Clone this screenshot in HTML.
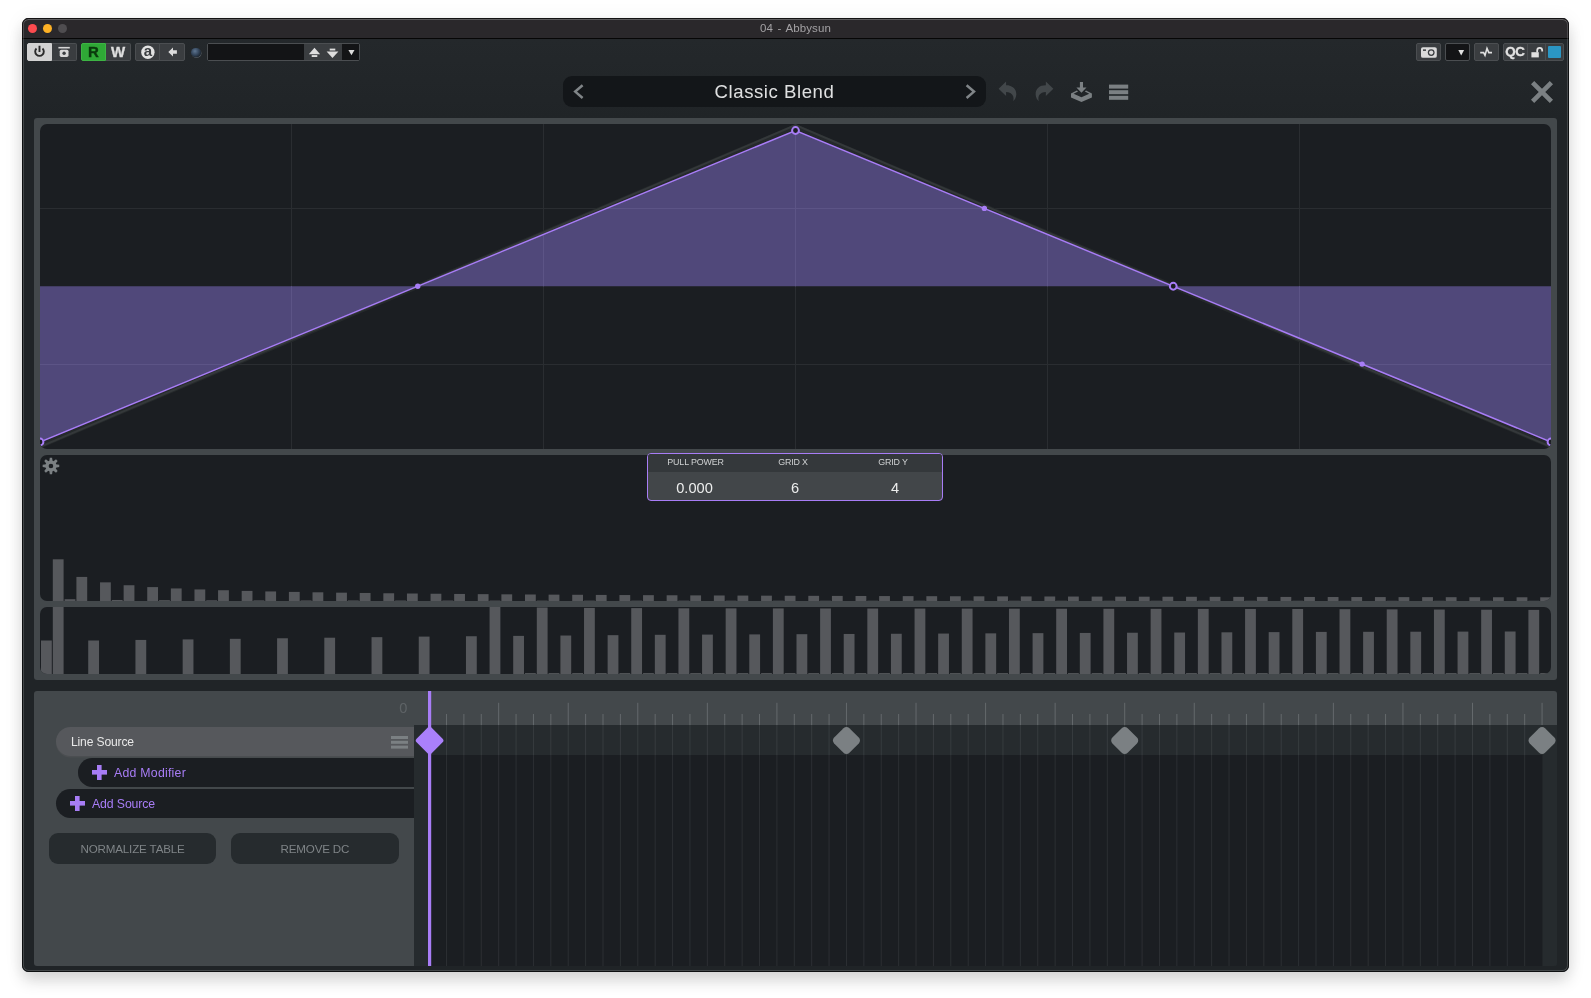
<!DOCTYPE html>
<html><head><meta charset="utf-8"><title>04 - Abbysun</title>
<style>
*{box-sizing:border-box;margin:0;padding:0}
html,body{width:1591px;height:998px;background:#fff;overflow:hidden}
body{position:relative;font-family:"Liberation Sans",sans-serif;}
.abs{position:absolute}
#win{position:absolute;left:22px;top:18px;width:1547px;height:954px;background:#23272a;border-radius:6.5px;overflow:hidden;will-change:transform;
 box-shadow:0 9px 16px rgba(0,0,0,.14),0 2px 20px rgba(0,0,0,.07);}
#rim{position:absolute;left:0;top:0;width:100%;height:100%;border-radius:6.5px;border:1px solid rgba(0,0,0,.55);box-shadow:inset 0 0 0 1px rgba(255,255,255,.16),inset 0 1px 0 0 rgba(255,255,255,.1);pointer-events:none}
#tbar{position:absolute;left:0;top:0;width:100%;height:21px;background:#2a282b;border-top:1px solid #2a282b;border-bottom:1px solid #060606;}
#ttl{position:absolute;left:0;width:100%;top:3px;text-align:center;font-size:11.5px;color:#a3a1a4;letter-spacing:0.1px;word-spacing:1.3px}
.tl{position:absolute;top:5px;width:9px;height:9px;border-radius:50%}
#gbody{position:absolute;left:0;top:21px;width:100%;height:933px;background:linear-gradient(#24282b,#202427 80px);}
.btn{position:absolute;top:25px;height:18px;background:#3a3d40;border:1px solid #4b4e51;}
.bl{position:absolute;left:0;top:0;width:100%;text-align:center;font-weight:bold;font-size:15px;line-height:16px;-webkit-text-stroke:0.35px currentColor}
.lb{position:absolute;top:2.1px;text-align:center;font-size:8.9px;line-height:13px;color:#d0d2d3;letter-spacing:-0.15px}
.vl{position:absolute;top:25.5px;text-align:center;font-size:14.6px;line-height:17px;color:#eceded}
.tx{font-size:12.3px;line-height:16px;white-space:nowrap}
.plus{width:15px;height:15px;background:linear-gradient(#a87df6,#a87df6) 50% 0/4.6px 100% no-repeat,linear-gradient(#a87df6,#a87df6) 0 50%/100% 4.6px no-repeat}
.bt{top:142px;height:31px;border-radius:9px;background:#262b2e;color:#7f8487;font-size:11.6px;letter-spacing:-0.15px;line-height:32.6px;text-align:center;white-space:nowrap}
</style></head><body>
<div id="win">
 <div id="gbody"></div>

 <!-- host toolbar -->
 <div id="hostbar">
  <div class="btn" style="left:5px;width:25px;background:#d2d2d2;border-color:#d2d2d2;border-radius:2px 0 0 2px">
   <svg class="abs" style="left:0;top:0" width="23" height="16" viewBox="0 0 23 16"><path d="M8.5 4.5A4.3 4.3 0 1 0 14.5 4.5" fill="none" stroke="#2a2a2a" stroke-width="1.9"/><path d="M11.5 1.8V8" stroke="#2a2a2a" stroke-width="1.9"/></svg>
  </div>
  <div class="btn" style="left:30px;width:25px;border-left:none;border-radius:0 2px 2px 0">
   <svg class="abs" style="left:0;top:0" width="24" height="16" viewBox="0 0 24 16"><rect x="6.4" y="2.9" width="11.4" height="1.6" fill="#d6d6d6"/><rect x="7.7" y="5.7" width="8.8" height="7.2" rx="1.6" fill="#d6d6d6"/><circle cx="12.1" cy="9.2" r="1.7" fill="#3a3d40"/></svg>
  </div>
  <div class="btn" style="left:59px;width:25px;background:#2fa836;border-color:#3db444;border-radius:2px 0 0 2px"><span class="bl" style="color:#0a3a0c">R</span></div>
  <div class="btn" style="left:84px;width:25px;border-left:none;border-radius:0 2px 2px 0"><span class="bl" style="color:#dedede">W</span></div>
  <div class="btn" style="left:113px;width:25px;border-radius:2px 0 0 2px">
   <svg class="abs" style="left:0;top:0" width="23" height="16" viewBox="0 0 23 16"><circle cx="11.9" cy="8.2" r="6.7" fill="#e2e2e2"/><text x="11.9" y="12.3" text-anchor="middle" style="font-family:'Liberation Sans',sans-serif;font-weight:bold;font-size:15px" fill="#3a3d40">a</text></svg>
  </div>
  <div class="btn" style="left:138px;width:25px;border-left:1px solid #4b4e51;border-radius:0 2px 2px 0;margin-left:-1px;width:26px">
   <svg class="abs" style="left:0;top:0" width="24" height="16" viewBox="0 0 24 16"><path d="M8.3 8L13 3.6V6.2H16.9V9.8H13V12.4Z" fill="#dcdcdc"/></svg>
  </div>
  <div class="abs" style="left:169px;top:29.5px;width:9.5px;height:9.5px;border-radius:50%;background:radial-gradient(circle at 40% 35%,#5e7590 0,#34465c 45%,#1a222c 80%);box-shadow:0.5px 0.8px 0 rgba(120,130,140,.55)"></div>
  <div class="btn" style="left:185px;width:153px;border-radius:2px"></div>
  <div class="abs" style="left:186px;top:26px;width:96px;height:16px;background:#131416"></div>
  <svg class="abs" style="left:282px;top:26px" width="38" height="16" viewBox="0 0 38 16"><path d="M4.8 10.2L10.5 3.8L16.2 10.2Z" fill="#dedede"/><rect x="7.7" y="11.1" width="5.6" height="1.9" fill="#dedede"/><path d="M22.6 7.4H34.4L28.5 14Z" fill="#dedede"/><rect x="25.7" y="4.6" width="5.6" height="1.9" fill="#dedede"/></svg>
  <div class="abs" style="left:320px;top:26px;width:17px;height:16px;background:#131416"></div>
  <svg class="abs" style="left:320px;top:26px" width="17" height="16" viewBox="0 0 17 16"><path d="M6.4 5.9H12.5L9.45 11.2Z" fill="#dcdcdc"/></svg>

  <div class="btn" style="left:1394px;width:25px;border-radius:2px">
   <svg class="abs" style="left:0;top:0" width="23" height="16" viewBox="0 0 23 16"><rect x="4" y="3.2" width="15.8" height="10.6" rx="1.9" fill="#dadada"/><circle cx="14.2" cy="8.6" r="3.4" fill="#3a3d40"/><circle cx="14.2" cy="8.6" r="2.1" fill="#dadada"/><rect x="6" y="5.4" width="3" height="1.5" fill="#3a3d40"/></svg>
  </div>
  <div class="btn" style="left:1423px;width:25px;border-radius:2px;background:#131416">
   <svg class="abs" style="left:0;top:0" width="23" height="16" viewBox="0 0 23 16"><path d="M12.3 6h5.8L15.2 11.4Z" fill="#e0e0e0"/></svg>
  </div>
  <div class="btn" style="left:1452px;width:25px;border-radius:2px">
   <svg class="abs" style="left:0;top:0" width="23" height="16" viewBox="0 0 23 16"><path d="M5.2 8.6H8.6L10 11.4L12 4.4L13.8 8.6H17" fill="none" stroke="#e0e0e0" stroke-width="1.6" stroke-linejoin="miter"/></svg>
  </div>
  <div class="btn" style="left:1481px;width:61px;border-radius:2px"></div>
  <div class="abs" style="left:1505px;top:26px;width:1px;height:16px;background:#4b4e51"></div>
  <div class="abs" style="left:1523px;top:26px;width:1px;height:16px;background:#4b4e51"></div>
  <span class="bl" style="left:1480.8px;top:25px;width:24px;font-size:13.4px;line-height:18px;color:#e2e2e2;letter-spacing:-0.5px">QC</span>
  <svg class="abs" style="left:1506px;top:26px" width="18" height="16" viewBox="0 0 18 16"><rect x="3.4" y="8.2" width="7.4" height="5.2" fill="#e0e0e0"/><path d="M9.2 8.4V6.4A2.5 2.5 0 0 1 14.2 6.4V7.6" fill="none" stroke="#e0e0e0" stroke-width="1.8"/></svg>
  <div class="abs" style="left:1526.4px;top:28px;width:12.6px;height:12px;background:#2b96c4;border-radius:1px"></div>
 </div>

 <!-- preset bar -->
 <div class="abs" style="left:541px;top:58px;width:423px;height:31px;border-radius:9px;background:#131619"></div>
 <div id="pname" class="abs" style="left:541px;top:58px;width:423px;height:31px;line-height:31px;text-align:center;font-size:18.6px;color:#dfe0e1;letter-spacing:0.55px">Classic Blend</div>
 <svg class="abs" style="left:541px;top:58px" width="600" height="31" viewBox="0 0 600 31">
  <path d="M19.6 9.2L12.2 15.6L19.6 22" fill="none" stroke="#808588" stroke-width="2.5"/>
  <path d="M403.6 9.2L411 15.6L403.6 22" fill="none" stroke="#808588" stroke-width="2.5"/>
  <g fill="#42474a"><path d="M435.6 12.7L443.1 5.4V9.3C449.5 9.3 453.4 12.6 453.3 18.4C453.2 21.3 451.8 23.7 450.1 25.1C451.6 20.4 449.2 16.2 443.1 16.1V19.9Z"/><path d="M490.35 12.7L482.85 5.4V9.3C476.45 9.3 472.55 12.6 472.65 18.4C472.75 21.3 474.15 23.7 475.85 25.1C474.35 20.4 476.75 16.2 482.85 16.1V19.9Z"/></g>
  <g fill="#7b8083">
   <path d="M516.9 6H520V11.6H523.5L518.45 16.8L513.4 11.6H516.9Z"/>
   <path d="M508 17.4L513.9 14.6L515 15.6L510.6 17.8L518.45 21.2L526.3 17.8L521.9 15.6L523 14.6L528.9 17.4V21.5L518.45 26.1L508 21.5Z"/>
   <rect x="546" y="8.6" width="19.2" height="4"/><rect x="546" y="14.2" width="19.2" height="4"/><rect x="546" y="19.8" width="19.2" height="4"/>
  </g>
 </svg>
 <svg class="abs" style="left:1508px;top:62px" width="24" height="24" viewBox="0 0 24 24"><path d="M2.6 2.6L21.4 21.4M21.4 2.6L2.6 21.4" stroke="#7b8083" stroke-width="4.6"/></svg>

 <!-- wave panel -->
 <div class="abs" style="left:12px;top:100px;width:1523px;height:562px;border-radius:3px;background:#43484b"></div>
 <div class="abs" id="wave" style="left:18px;top:106px;width:1511px;height:325px;border-radius:7px;background:#1b1e22;overflow:hidden"><svg class="abs" style="left:0;top:0" width="1511" height="325" viewBox="0 0 1511 325"><rect x="251" y="0" width="1" height="325" fill="#2a2d31"/><rect x="503" y="0" width="1" height="325" fill="#2a2d31"/><rect x="755" y="0" width="1" height="325" fill="#2a2d31"/><rect x="1007" y="0" width="1" height="325" fill="#2a2d31"/><rect x="1259" y="0" width="1" height="325" fill="#2a2d31"/><rect x="0" y="84" width="1511" height="1" fill="#2a2d31"/><rect x="0" y="240" width="1511" height="1" fill="#2a2d31"/><path d="M0 322L755.5 2.6L1511 322" fill="none" stroke="#25292b" stroke-width="5"/><path d="M0 322.9L755.5 1.2L1511 322.9" fill="none" stroke="#34383a" stroke-width="2"/><path d="M0 162.25L0 318.00L755.5 6.50L1511 318.00L1511 162.25Z" fill="#50487a"/><clipPath id="cf"><path d="M0 162.25L0 318.00L755.5 6.50L1511 318.00L1511 162.25Z"/></clipPath><g clip-path="url(#cf)" fill="#5c5486"><rect x="251" y="0" width="1" height="325"/><rect x="503" y="0" width="1" height="325"/><rect x="755" y="0" width="1" height="325"/><rect x="1007" y="0" width="1" height="325"/><rect x="1259" y="0" width="1" height="325"/><rect x="0" y="84" width="1511" height="1"/><rect x="0" y="240" width="1511" height="1"/></g><path d="M0 318.00L755.5 6.50L1511 318.00" fill="none" stroke="#a87df6" stroke-width="1.45"/><circle cx="377.75" cy="162.25" r="2.7" fill="#a87df6"/><circle cx="944.38" cy="84.38" r="2.7" fill="#a87df6"/><circle cx="1322.12" cy="240.12" r="2.7" fill="#a87df6"/><circle cx="0.00" cy="318.00" r="3.4" fill="#1b1e22" stroke="#a87df6" stroke-width="2"/><circle cx="755.50" cy="6.50" r="3.4" fill="#1b1e22" stroke="#a87df6" stroke-width="2"/><circle cx="1133.25" cy="162.25" r="3.4" fill="#1b1e22" stroke="#a87df6" stroke-width="2"/><circle cx="1511.00" cy="318.00" r="3.4" fill="#1b1e22" stroke="#a87df6" stroke-width="2"/></svg></div>
 <div class="abs" id="amp" style="left:18px;top:437px;width:1511px;height:146px;border-radius:7px;background:#1b1e22;overflow:hidden"><svg class="abs" style="left:0;top:0" width="1511" height="146" viewBox="0 0 1511 146"><g fill="#56585c"><rect x="12.80" y="104.30" width="10.8" height="41.70"/><rect x="24.61" y="144.20" width="10.8" height="1.80"/><rect x="36.41" y="121.92" width="10.8" height="24.08"/><rect x="60.02" y="127.35" width="10.8" height="18.65"/><rect x="71.83" y="144.96" width="10.8" height="1.04"/><rect x="83.63" y="130.24" width="10.8" height="15.76"/><rect x="107.24" y="132.10" width="10.8" height="13.90"/><rect x="119.05" y="145.20" width="10.8" height="0.80"/><rect x="130.85" y="133.43" width="10.8" height="12.57"/><rect x="154.46" y="134.43" width="10.8" height="11.57"/><rect x="166.27" y="145.32" width="10.8" height="0.68"/><rect x="178.07" y="135.23" width="10.8" height="10.77"/><rect x="201.68" y="135.89" width="10.8" height="10.11"/><rect x="213.48" y="145.40" width="10.8" height="0.60"/><rect x="225.29" y="136.43" width="10.8" height="9.57"/><rect x="248.90" y="136.90" width="10.8" height="9.10"/><rect x="260.70" y="145.46" width="10.8" height="0.54"/><rect x="272.51" y="137.30" width="10.8" height="8.70"/><rect x="296.12" y="137.66" width="10.8" height="8.34"/><rect x="307.92" y="145.50" width="10.8" height="0.50"/><rect x="319.73" y="137.97" width="10.8" height="8.03"/><rect x="343.34" y="138.26" width="10.8" height="7.74"/><rect x="355.14" y="145.54" width="10.8" height="0.46"/><rect x="366.95" y="138.51" width="10.8" height="7.49"/><rect x="390.55" y="138.74" width="10.8" height="7.26"/><rect x="402.36" y="145.56" width="10.8" height="0.44"/><rect x="414.16" y="138.95" width="10.8" height="7.05"/><rect x="437.77" y="139.14" width="10.8" height="6.86"/><rect x="449.58" y="145.59" width="10.8" height="0.41"/><rect x="461.38" y="139.32" width="10.8" height="6.68"/><rect x="484.99" y="139.49" width="10.8" height="6.51"/><rect x="496.80" y="145.61" width="10.8" height="0.39"/><rect x="508.60" y="139.64" width="10.8" height="6.36"/><rect x="532.21" y="139.78" width="10.8" height="6.22"/><rect x="544.02" y="145.62" width="10.8" height="0.38"/><rect x="555.82" y="139.92" width="10.8" height="6.08"/><rect x="579.43" y="140.04" width="10.8" height="5.96"/><rect x="591.23" y="145.64" width="10.8" height="0.36"/><rect x="603.04" y="140.16" width="10.8" height="5.84"/><rect x="626.65" y="140.27" width="10.8" height="5.73"/><rect x="638.45" y="145.65" width="10.8" height="0.35"/><rect x="650.26" y="140.38" width="10.8" height="5.62"/><rect x="673.87" y="140.48" width="10.8" height="5.52"/><rect x="685.67" y="145.67" width="10.8" height="0.33"/><rect x="697.48" y="140.57" width="10.8" height="5.43"/><rect x="721.09" y="140.66" width="10.8" height="5.34"/><rect x="732.89" y="145.68" width="10.8" height="0.32"/><rect x="744.70" y="140.75" width="10.8" height="5.25"/><rect x="768.30" y="140.83" width="10.8" height="5.17"/><rect x="780.11" y="145.69" width="10.8" height="0.31"/><rect x="791.91" y="140.91" width="10.8" height="5.09"/><rect x="815.52" y="140.98" width="10.8" height="5.02"/><rect x="827.33" y="145.70" width="10.8" height="0.30"/><rect x="839.13" y="141.05" width="10.8" height="4.95"/><rect x="862.74" y="141.12" width="10.8" height="4.88"/><rect x="874.55" y="145.70" width="10.8" height="0.30"/><rect x="886.35" y="141.18" width="10.8" height="4.82"/><rect x="909.96" y="141.25" width="10.8" height="4.75"/><rect x="921.77" y="145.71" width="10.8" height="0.29"/><rect x="933.57" y="141.31" width="10.8" height="4.69"/><rect x="957.18" y="141.37" width="10.8" height="4.63"/><rect x="968.98" y="145.72" width="10.8" height="0.28"/><rect x="980.79" y="141.42" width="10.8" height="4.58"/><rect x="1004.40" y="141.48" width="10.8" height="4.52"/><rect x="1016.20" y="145.73" width="10.8" height="0.27"/><rect x="1028.01" y="141.53" width="10.8" height="4.47"/><rect x="1051.62" y="141.58" width="10.8" height="4.42"/><rect x="1063.42" y="145.73" width="10.8" height="0.27"/><rect x="1075.23" y="141.63" width="10.8" height="4.37"/><rect x="1098.84" y="141.68" width="10.8" height="4.32"/><rect x="1110.64" y="145.74" width="10.8" height="0.26"/><rect x="1122.45" y="141.72" width="10.8" height="4.28"/><rect x="1146.05" y="141.77" width="10.8" height="4.23"/><rect x="1157.86" y="145.74" width="10.8" height="0.26"/><rect x="1169.66" y="141.81" width="10.8" height="4.19"/><rect x="1193.27" y="141.85" width="10.8" height="4.15"/><rect x="1205.08" y="145.75" width="10.8" height="0.25"/><rect x="1216.88" y="141.89" width="10.8" height="4.11"/><rect x="1240.49" y="141.93" width="10.8" height="4.07"/><rect x="1252.30" y="145.75" width="10.8" height="0.25"/><rect x="1264.10" y="141.97" width="10.8" height="4.03"/><rect x="1287.71" y="142.01" width="10.8" height="3.99"/><rect x="1299.52" y="145.76" width="10.8" height="0.24"/><rect x="1311.32" y="142.04" width="10.8" height="3.96"/><rect x="1334.93" y="142.08" width="10.8" height="3.92"/><rect x="1346.73" y="145.76" width="10.8" height="0.24"/><rect x="1358.54" y="142.11" width="10.8" height="3.89"/><rect x="1382.15" y="142.14" width="10.8" height="3.86"/><rect x="1393.95" y="145.77" width="10.8" height="0.23"/><rect x="1405.76" y="142.18" width="10.8" height="3.82"/><rect x="1429.37" y="142.21" width="10.8" height="3.79"/><rect x="1441.17" y="145.77" width="10.8" height="0.23"/><rect x="1452.98" y="142.24" width="10.8" height="3.76"/><rect x="1476.59" y="142.27" width="10.8" height="3.73"/><rect x="1488.39" y="145.77" width="10.8" height="0.23"/><rect x="1500.20" y="142.30" width="10.8" height="3.70"/></g><g transform="translate(10.95 10.95)" fill="#7b8083"><path transform="rotate(0)" d="M-1.7 -4.4L-1.15 -8.3H1.15L1.7 -4.4Z"/><path transform="rotate(45)" d="M-1.7 -4.4L-1.15 -8.3H1.15L1.7 -4.4Z"/><path transform="rotate(90)" d="M-1.7 -4.4L-1.15 -8.3H1.15L1.7 -4.4Z"/><path transform="rotate(135)" d="M-1.7 -4.4L-1.15 -8.3H1.15L1.7 -4.4Z"/><path transform="rotate(180)" d="M-1.7 -4.4L-1.15 -8.3H1.15L1.7 -4.4Z"/><path transform="rotate(225)" d="M-1.7 -4.4L-1.15 -8.3H1.15L1.7 -4.4Z"/><path transform="rotate(270)" d="M-1.7 -4.4L-1.15 -8.3H1.15L1.7 -4.4Z"/><path transform="rotate(315)" d="M-1.7 -4.4L-1.15 -8.3H1.15L1.7 -4.4Z"/><path fill-rule="evenodd" d="M0 -5.5A5.5 5.5 0 1 0 0 5.5A5.5 5.5 0 1 0 0 -5.5ZM0 -2.3A2.3 2.3 0 1 1 0 2.3A2.3 2.3 0 1 1 0 -2.3Z"/></g></svg></div>
 <div class="abs" id="phase" style="left:18px;top:589px;width:1511px;height:67px;border-radius:7px;background:#1b1e22;overflow:hidden"><svg class="abs" style="left:0;top:0" width="1511" height="67" viewBox="0 0 1511 67"><g fill="#56585c"><rect x="1.00" y="33.50" width="10.8" height="33.50"/><rect x="12.80" y="0.00" width="10.8" height="67.00"/><rect x="48.22" y="33.50" width="10.8" height="33.50"/><rect x="95.44" y="32.94" width="10.8" height="34.06"/><rect x="142.66" y="32.39" width="10.8" height="34.61"/><rect x="189.88" y="31.83" width="10.8" height="35.17"/><rect x="237.09" y="31.27" width="10.8" height="35.73"/><rect x="284.31" y="30.71" width="10.8" height="36.29"/><rect x="331.53" y="30.16" width="10.8" height="36.84"/><rect x="378.75" y="29.60" width="10.8" height="37.40"/><rect x="425.97" y="29.24" width="10.8" height="37.76"/><rect x="449.58" y="0.00" width="10.8" height="67.00"/><rect x="473.19" y="28.88" width="10.8" height="38.12"/><rect x="484.99" y="66.10" width="10.8" height="0.90"/><rect x="496.80" y="0.50" width="10.8" height="66.50"/><rect x="508.60" y="66.10" width="10.8" height="0.90"/><rect x="520.41" y="28.52" width="10.8" height="38.48"/><rect x="532.21" y="66.10" width="10.8" height="0.90"/><rect x="544.02" y="0.90" width="10.8" height="66.10"/><rect x="555.82" y="66.10" width="10.8" height="0.90"/><rect x="567.62" y="28.16" width="10.8" height="38.84"/><rect x="579.43" y="66.10" width="10.8" height="0.90"/><rect x="591.23" y="1.10" width="10.8" height="65.90"/><rect x="603.04" y="66.10" width="10.8" height="0.90"/><rect x="614.84" y="27.80" width="10.8" height="39.20"/><rect x="626.65" y="66.10" width="10.8" height="0.90"/><rect x="638.45" y="1.30" width="10.8" height="65.70"/><rect x="650.26" y="66.10" width="10.8" height="0.90"/><rect x="662.06" y="27.59" width="10.8" height="39.41"/><rect x="673.87" y="66.10" width="10.8" height="0.90"/><rect x="685.67" y="1.35" width="10.8" height="65.65"/><rect x="697.48" y="66.10" width="10.8" height="0.90"/><rect x="709.28" y="27.39" width="10.8" height="39.61"/><rect x="721.09" y="66.10" width="10.8" height="0.90"/><rect x="732.89" y="1.41" width="10.8" height="65.59"/><rect x="744.70" y="66.10" width="10.8" height="0.90"/><rect x="756.50" y="27.18" width="10.8" height="39.82"/><rect x="768.30" y="66.10" width="10.8" height="0.90"/><rect x="780.11" y="1.46" width="10.8" height="65.54"/><rect x="791.91" y="66.10" width="10.8" height="0.90"/><rect x="803.72" y="26.97" width="10.8" height="40.03"/><rect x="815.52" y="66.10" width="10.8" height="0.90"/><rect x="827.33" y="1.52" width="10.8" height="65.48"/><rect x="839.13" y="66.10" width="10.8" height="0.90"/><rect x="850.94" y="26.76" width="10.8" height="40.24"/><rect x="862.74" y="66.10" width="10.8" height="0.90"/><rect x="874.55" y="1.57" width="10.8" height="65.43"/><rect x="886.35" y="66.10" width="10.8" height="0.90"/><rect x="898.16" y="26.56" width="10.8" height="40.44"/><rect x="909.96" y="66.10" width="10.8" height="0.90"/><rect x="921.77" y="1.62" width="10.8" height="65.38"/><rect x="933.57" y="66.10" width="10.8" height="0.90"/><rect x="945.38" y="26.35" width="10.8" height="40.65"/><rect x="957.18" y="66.10" width="10.8" height="0.90"/><rect x="968.98" y="1.68" width="10.8" height="65.32"/><rect x="980.79" y="66.10" width="10.8" height="0.90"/><rect x="992.59" y="26.14" width="10.8" height="40.86"/><rect x="1004.40" y="66.10" width="10.8" height="0.90"/><rect x="1016.20" y="1.73" width="10.8" height="65.27"/><rect x="1028.01" y="66.10" width="10.8" height="0.90"/><rect x="1039.81" y="25.94" width="10.8" height="41.06"/><rect x="1051.62" y="66.10" width="10.8" height="0.90"/><rect x="1063.42" y="1.78" width="10.8" height="65.22"/><rect x="1075.23" y="66.10" width="10.8" height="0.90"/><rect x="1087.03" y="25.73" width="10.8" height="41.27"/><rect x="1098.84" y="66.10" width="10.8" height="0.90"/><rect x="1110.64" y="1.84" width="10.8" height="65.16"/><rect x="1122.45" y="66.10" width="10.8" height="0.90"/><rect x="1134.25" y="25.52" width="10.8" height="41.48"/><rect x="1146.05" y="66.10" width="10.8" height="0.90"/><rect x="1157.86" y="1.89" width="10.8" height="65.11"/><rect x="1169.66" y="66.10" width="10.8" height="0.90"/><rect x="1181.47" y="25.31" width="10.8" height="41.69"/><rect x="1193.27" y="66.10" width="10.8" height="0.90"/><rect x="1205.08" y="1.95" width="10.8" height="65.05"/><rect x="1216.88" y="66.10" width="10.8" height="0.90"/><rect x="1228.69" y="25.11" width="10.8" height="41.89"/><rect x="1240.49" y="66.10" width="10.8" height="0.90"/><rect x="1252.30" y="2.00" width="10.8" height="65.00"/><rect x="1264.10" y="66.10" width="10.8" height="0.90"/><rect x="1275.91" y="24.90" width="10.8" height="42.10"/><rect x="1287.71" y="66.10" width="10.8" height="0.90"/><rect x="1299.52" y="2.18" width="10.8" height="64.82"/><rect x="1311.32" y="66.10" width="10.8" height="0.90"/><rect x="1323.12" y="24.80" width="10.8" height="42.20"/><rect x="1334.93" y="66.10" width="10.8" height="0.90"/><rect x="1346.73" y="2.36" width="10.8" height="64.64"/><rect x="1358.54" y="66.10" width="10.8" height="0.90"/><rect x="1370.34" y="24.70" width="10.8" height="42.30"/><rect x="1382.15" y="66.10" width="10.8" height="0.90"/><rect x="1393.95" y="2.54" width="10.8" height="64.46"/><rect x="1405.76" y="66.10" width="10.8" height="0.90"/><rect x="1417.56" y="24.60" width="10.8" height="42.40"/><rect x="1429.37" y="66.10" width="10.8" height="0.90"/><rect x="1441.17" y="2.72" width="10.8" height="64.28"/><rect x="1452.98" y="66.10" width="10.8" height="0.90"/><rect x="1464.78" y="24.50" width="10.8" height="42.50"/><rect x="1476.59" y="66.10" width="10.8" height="0.90"/><rect x="1488.39" y="2.90" width="10.8" height="64.10"/><rect x="1500.20" y="66.10" width="10.8" height="0.90"/></g></svg></div>


 <div class="abs" id="ibox" style="left:625px;top:435px;width:296px;height:48px;border-radius:4px;background:#424649;border:1.4px solid #a87df6;overflow:hidden">
  <div class="abs" style="left:0;top:0;width:100%;height:17.6px;background:#34383b"></div>
  <div class="lb" style="left:1px;width:93px">PULL POWER</div><div class="lb" style="left:95px;width:100px">GRID X</div><div class="lb" style="left:195px;width:100px">GRID Y</div>
  <div class="vl" style="left:0px;width:93px">0.000</div><div class="vl" style="left:97px;width:100px">6</div><div class="vl" style="left:197px;width:100px">4</div>
 </div>
 <!-- bottom panel -->
 <div class="abs" id="bottom" style="left:12px;top:673px;width:1523px;height:275px;border-radius:3px;background:#43484b;overflow:hidden">
  <div class="abs" style="left:362.3px;top:9px;width:14px;font-size:14.6px;line-height:16px;color:#5e6366;text-align:center">0</div>
  <div class="abs" style="left:22px;top:36px;width:358px;height:29.2px;border-radius:14.6px 0 0 14.6px;background:#56585c;box-shadow:0 1.6px 0 #4b4e51"></div>
  <div class="abs tx" style="left:37px;top:43px;color:#e8e8e8;font-size:12.1px;letter-spacing:-0.15px">Line Source</div>
  <div class="abs" style="left:357px;top:44.6px;width:17px;height:3.3px;background:#7b8083;box-shadow:0 4.8px 0 #7b8083,0 9.6px 0 #7b8083"></div>
  <div class="abs" style="left:44px;top:67.2px;width:336px;height:28.6px;border-radius:14.3px 0 0 14.3px;background:#1b1e22"></div>
  <div class="abs plus" style="left:58px;top:74px"></div>
  <div class="abs tx" style="left:80px;top:74px;color:#a87df6;letter-spacing:0.25px">Add Modifier</div>
  <div class="abs" style="left:22px;top:98px;width:358px;height:28.8px;border-radius:14.4px 0 0 14.4px;background:#1b1e22"></div>
  <div class="abs plus" style="left:36px;top:105px"></div>
  <div class="abs tx" style="left:58px;top:105px;color:#a87df6;letter-spacing:-0.12px">Add Source</div>
  <div class="abs bt" style="left:14.8px;width:167.5px">NORMALIZE TABLE</div>
  <div class="abs bt" style="left:196.8px;width:168.2px">REMOVE DC</div>
<svg class="abs" style="left:380px;top:0" width="1143" height="275" viewBox="0 0 1143 275"><rect x="0" y="34" width="1143" height="241" fill="#1b1e22"/><rect x="0" y="34" width="1143" height="30" fill="#262b2e"/><rect x="0" y="34" width="15.6" height="241" fill="#262b2e"/><rect x="1128.4" y="34" width="14.6" height="241" fill="#262b2e"/><rect x="31.99" y="23.0" width="1" height="11.0" fill="#64696c"/><rect x="31.99" y="34" width="1" height="30" fill="#373c3f"/><rect x="31.99" y="64" width="1" height="211" fill="#2c2f33"/><rect x="49.38" y="23.0" width="1" height="11.0" fill="#64696c"/><rect x="49.38" y="34" width="1" height="30" fill="#373c3f"/><rect x="49.38" y="64" width="1" height="211" fill="#2c2f33"/><rect x="66.77" y="23.0" width="1" height="11.0" fill="#64696c"/><rect x="66.77" y="34" width="1" height="30" fill="#373c3f"/><rect x="66.77" y="64" width="1" height="211" fill="#2c2f33"/><rect x="84.16" y="11.8" width="1" height="22.2" fill="#64696c"/><rect x="84.16" y="34" width="1" height="30" fill="#373c3f"/><rect x="84.16" y="64" width="1" height="211" fill="#2c2f33"/><rect x="101.55" y="23.0" width="1" height="11.0" fill="#64696c"/><rect x="101.55" y="34" width="1" height="30" fill="#373c3f"/><rect x="101.55" y="64" width="1" height="211" fill="#2c2f33"/><rect x="118.94" y="23.0" width="1" height="11.0" fill="#64696c"/><rect x="118.94" y="34" width="1" height="30" fill="#373c3f"/><rect x="118.94" y="64" width="1" height="211" fill="#2c2f33"/><rect x="136.33" y="23.0" width="1" height="11.0" fill="#64696c"/><rect x="136.33" y="34" width="1" height="30" fill="#373c3f"/><rect x="136.33" y="64" width="1" height="211" fill="#2c2f33"/><rect x="153.72" y="11.8" width="1" height="22.2" fill="#64696c"/><rect x="153.72" y="34" width="1" height="30" fill="#373c3f"/><rect x="153.72" y="64" width="1" height="211" fill="#2c2f33"/><rect x="171.11" y="23.0" width="1" height="11.0" fill="#64696c"/><rect x="171.11" y="34" width="1" height="30" fill="#373c3f"/><rect x="171.11" y="64" width="1" height="211" fill="#2c2f33"/><rect x="188.50" y="23.0" width="1" height="11.0" fill="#64696c"/><rect x="188.50" y="34" width="1" height="30" fill="#373c3f"/><rect x="188.50" y="64" width="1" height="211" fill="#2c2f33"/><rect x="205.89" y="23.0" width="1" height="11.0" fill="#64696c"/><rect x="205.89" y="34" width="1" height="30" fill="#373c3f"/><rect x="205.89" y="64" width="1" height="211" fill="#2c2f33"/><rect x="223.28" y="11.8" width="1" height="22.2" fill="#64696c"/><rect x="223.28" y="34" width="1" height="30" fill="#373c3f"/><rect x="223.28" y="64" width="1" height="211" fill="#2c2f33"/><rect x="240.67" y="23.0" width="1" height="11.0" fill="#64696c"/><rect x="240.67" y="34" width="1" height="30" fill="#373c3f"/><rect x="240.67" y="64" width="1" height="211" fill="#2c2f33"/><rect x="258.06" y="23.0" width="1" height="11.0" fill="#64696c"/><rect x="258.06" y="34" width="1" height="30" fill="#373c3f"/><rect x="258.06" y="64" width="1" height="211" fill="#2c2f33"/><rect x="275.45" y="23.0" width="1" height="11.0" fill="#64696c"/><rect x="275.45" y="34" width="1" height="30" fill="#373c3f"/><rect x="275.45" y="64" width="1" height="211" fill="#2c2f33"/><rect x="292.84" y="11.8" width="1" height="22.2" fill="#64696c"/><rect x="292.84" y="34" width="1" height="30" fill="#373c3f"/><rect x="292.84" y="64" width="1" height="211" fill="#2c2f33"/><rect x="310.23" y="23.0" width="1" height="11.0" fill="#64696c"/><rect x="310.23" y="34" width="1" height="30" fill="#373c3f"/><rect x="310.23" y="64" width="1" height="211" fill="#2c2f33"/><rect x="327.62" y="23.0" width="1" height="11.0" fill="#64696c"/><rect x="327.62" y="34" width="1" height="30" fill="#373c3f"/><rect x="327.62" y="64" width="1" height="211" fill="#2c2f33"/><rect x="345.01" y="23.0" width="1" height="11.0" fill="#64696c"/><rect x="345.01" y="34" width="1" height="30" fill="#373c3f"/><rect x="345.01" y="64" width="1" height="211" fill="#2c2f33"/><rect x="362.40" y="11.8" width="1" height="22.2" fill="#64696c"/><rect x="362.40" y="34" width="1" height="30" fill="#373c3f"/><rect x="362.40" y="64" width="1" height="211" fill="#2c2f33"/><rect x="379.79" y="23.0" width="1" height="11.0" fill="#64696c"/><rect x="379.79" y="34" width="1" height="30" fill="#373c3f"/><rect x="379.79" y="64" width="1" height="211" fill="#2c2f33"/><rect x="397.18" y="23.0" width="1" height="11.0" fill="#64696c"/><rect x="397.18" y="34" width="1" height="30" fill="#373c3f"/><rect x="397.18" y="64" width="1" height="211" fill="#2c2f33"/><rect x="414.57" y="23.0" width="1" height="11.0" fill="#64696c"/><rect x="414.57" y="34" width="1" height="30" fill="#373c3f"/><rect x="414.57" y="64" width="1" height="211" fill="#2c2f33"/><rect x="431.96" y="11.8" width="1" height="22.2" fill="#64696c"/><rect x="431.96" y="34" width="1" height="30" fill="#373c3f"/><rect x="431.96" y="64" width="1" height="211" fill="#2c2f33"/><rect x="449.35" y="23.0" width="1" height="11.0" fill="#64696c"/><rect x="449.35" y="34" width="1" height="30" fill="#373c3f"/><rect x="449.35" y="64" width="1" height="211" fill="#2c2f33"/><rect x="466.74" y="23.0" width="1" height="11.0" fill="#64696c"/><rect x="466.74" y="34" width="1" height="30" fill="#373c3f"/><rect x="466.74" y="64" width="1" height="211" fill="#2c2f33"/><rect x="484.13" y="23.0" width="1" height="11.0" fill="#64696c"/><rect x="484.13" y="34" width="1" height="30" fill="#373c3f"/><rect x="484.13" y="64" width="1" height="211" fill="#2c2f33"/><rect x="501.52" y="11.8" width="1" height="22.2" fill="#64696c"/><rect x="501.52" y="34" width="1" height="30" fill="#373c3f"/><rect x="501.52" y="64" width="1" height="211" fill="#2c2f33"/><rect x="518.91" y="23.0" width="1" height="11.0" fill="#64696c"/><rect x="518.91" y="34" width="1" height="30" fill="#373c3f"/><rect x="518.91" y="64" width="1" height="211" fill="#2c2f33"/><rect x="536.30" y="23.0" width="1" height="11.0" fill="#64696c"/><rect x="536.30" y="34" width="1" height="30" fill="#373c3f"/><rect x="536.30" y="64" width="1" height="211" fill="#2c2f33"/><rect x="553.69" y="23.0" width="1" height="11.0" fill="#64696c"/><rect x="553.69" y="34" width="1" height="30" fill="#373c3f"/><rect x="553.69" y="64" width="1" height="211" fill="#2c2f33"/><rect x="571.08" y="11.8" width="1" height="22.2" fill="#64696c"/><rect x="571.08" y="34" width="1" height="30" fill="#373c3f"/><rect x="571.08" y="64" width="1" height="211" fill="#2c2f33"/><rect x="588.47" y="23.0" width="1" height="11.0" fill="#64696c"/><rect x="588.47" y="34" width="1" height="30" fill="#373c3f"/><rect x="588.47" y="64" width="1" height="211" fill="#2c2f33"/><rect x="605.86" y="23.0" width="1" height="11.0" fill="#64696c"/><rect x="605.86" y="34" width="1" height="30" fill="#373c3f"/><rect x="605.86" y="64" width="1" height="211" fill="#2c2f33"/><rect x="623.25" y="23.0" width="1" height="11.0" fill="#64696c"/><rect x="623.25" y="34" width="1" height="30" fill="#373c3f"/><rect x="623.25" y="64" width="1" height="211" fill="#2c2f33"/><rect x="640.64" y="11.8" width="1" height="22.2" fill="#64696c"/><rect x="640.64" y="34" width="1" height="30" fill="#373c3f"/><rect x="640.64" y="64" width="1" height="211" fill="#2c2f33"/><rect x="658.03" y="23.0" width="1" height="11.0" fill="#64696c"/><rect x="658.03" y="34" width="1" height="30" fill="#373c3f"/><rect x="658.03" y="64" width="1" height="211" fill="#2c2f33"/><rect x="675.42" y="23.0" width="1" height="11.0" fill="#64696c"/><rect x="675.42" y="34" width="1" height="30" fill="#373c3f"/><rect x="675.42" y="64" width="1" height="211" fill="#2c2f33"/><rect x="692.81" y="23.0" width="1" height="11.0" fill="#64696c"/><rect x="692.81" y="34" width="1" height="30" fill="#373c3f"/><rect x="692.81" y="64" width="1" height="211" fill="#2c2f33"/><rect x="710.20" y="11.8" width="1" height="22.2" fill="#64696c"/><rect x="710.20" y="34" width="1" height="30" fill="#373c3f"/><rect x="710.20" y="64" width="1" height="211" fill="#2c2f33"/><rect x="727.59" y="23.0" width="1" height="11.0" fill="#64696c"/><rect x="727.59" y="34" width="1" height="30" fill="#373c3f"/><rect x="727.59" y="64" width="1" height="211" fill="#2c2f33"/><rect x="744.98" y="23.0" width="1" height="11.0" fill="#64696c"/><rect x="744.98" y="34" width="1" height="30" fill="#373c3f"/><rect x="744.98" y="64" width="1" height="211" fill="#2c2f33"/><rect x="762.37" y="23.0" width="1" height="11.0" fill="#64696c"/><rect x="762.37" y="34" width="1" height="30" fill="#373c3f"/><rect x="762.37" y="64" width="1" height="211" fill="#2c2f33"/><rect x="779.76" y="11.8" width="1" height="22.2" fill="#64696c"/><rect x="779.76" y="34" width="1" height="30" fill="#373c3f"/><rect x="779.76" y="64" width="1" height="211" fill="#2c2f33"/><rect x="797.15" y="23.0" width="1" height="11.0" fill="#64696c"/><rect x="797.15" y="34" width="1" height="30" fill="#373c3f"/><rect x="797.15" y="64" width="1" height="211" fill="#2c2f33"/><rect x="814.54" y="23.0" width="1" height="11.0" fill="#64696c"/><rect x="814.54" y="34" width="1" height="30" fill="#373c3f"/><rect x="814.54" y="64" width="1" height="211" fill="#2c2f33"/><rect x="831.93" y="23.0" width="1" height="11.0" fill="#64696c"/><rect x="831.93" y="34" width="1" height="30" fill="#373c3f"/><rect x="831.93" y="64" width="1" height="211" fill="#2c2f33"/><rect x="849.32" y="11.8" width="1" height="22.2" fill="#64696c"/><rect x="849.32" y="34" width="1" height="30" fill="#373c3f"/><rect x="849.32" y="64" width="1" height="211" fill="#2c2f33"/><rect x="866.71" y="23.0" width="1" height="11.0" fill="#64696c"/><rect x="866.71" y="34" width="1" height="30" fill="#373c3f"/><rect x="866.71" y="64" width="1" height="211" fill="#2c2f33"/><rect x="884.10" y="23.0" width="1" height="11.0" fill="#64696c"/><rect x="884.10" y="34" width="1" height="30" fill="#373c3f"/><rect x="884.10" y="64" width="1" height="211" fill="#2c2f33"/><rect x="901.49" y="23.0" width="1" height="11.0" fill="#64696c"/><rect x="901.49" y="34" width="1" height="30" fill="#373c3f"/><rect x="901.49" y="64" width="1" height="211" fill="#2c2f33"/><rect x="918.88" y="11.8" width="1" height="22.2" fill="#64696c"/><rect x="918.88" y="34" width="1" height="30" fill="#373c3f"/><rect x="918.88" y="64" width="1" height="211" fill="#2c2f33"/><rect x="936.27" y="23.0" width="1" height="11.0" fill="#64696c"/><rect x="936.27" y="34" width="1" height="30" fill="#373c3f"/><rect x="936.27" y="64" width="1" height="211" fill="#2c2f33"/><rect x="953.66" y="23.0" width="1" height="11.0" fill="#64696c"/><rect x="953.66" y="34" width="1" height="30" fill="#373c3f"/><rect x="953.66" y="64" width="1" height="211" fill="#2c2f33"/><rect x="971.05" y="23.0" width="1" height="11.0" fill="#64696c"/><rect x="971.05" y="34" width="1" height="30" fill="#373c3f"/><rect x="971.05" y="64" width="1" height="211" fill="#2c2f33"/><rect x="988.44" y="11.8" width="1" height="22.2" fill="#64696c"/><rect x="988.44" y="34" width="1" height="30" fill="#373c3f"/><rect x="988.44" y="64" width="1" height="211" fill="#2c2f33"/><rect x="1005.83" y="23.0" width="1" height="11.0" fill="#64696c"/><rect x="1005.83" y="34" width="1" height="30" fill="#373c3f"/><rect x="1005.83" y="64" width="1" height="211" fill="#2c2f33"/><rect x="1023.22" y="23.0" width="1" height="11.0" fill="#64696c"/><rect x="1023.22" y="34" width="1" height="30" fill="#373c3f"/><rect x="1023.22" y="64" width="1" height="211" fill="#2c2f33"/><rect x="1040.61" y="23.0" width="1" height="11.0" fill="#64696c"/><rect x="1040.61" y="34" width="1" height="30" fill="#373c3f"/><rect x="1040.61" y="64" width="1" height="211" fill="#2c2f33"/><rect x="1058.00" y="11.8" width="1" height="22.2" fill="#64696c"/><rect x="1058.00" y="34" width="1" height="30" fill="#373c3f"/><rect x="1058.00" y="64" width="1" height="211" fill="#2c2f33"/><rect x="1075.39" y="23.0" width="1" height="11.0" fill="#64696c"/><rect x="1075.39" y="34" width="1" height="30" fill="#373c3f"/><rect x="1075.39" y="64" width="1" height="211" fill="#2c2f33"/><rect x="1092.78" y="23.0" width="1" height="11.0" fill="#64696c"/><rect x="1092.78" y="34" width="1" height="30" fill="#373c3f"/><rect x="1092.78" y="64" width="1" height="211" fill="#2c2f33"/><rect x="1110.17" y="23.0" width="1" height="11.0" fill="#64696c"/><rect x="1110.17" y="34" width="1" height="30" fill="#373c3f"/><rect x="1110.17" y="64" width="1" height="211" fill="#2c2f33"/><rect x="1127.56" y="11.8" width="1" height="22.2" fill="#64696c"/><rect x="421.66" y="38.70" width="21.6" height="21.6" rx="4.2" transform="rotate(45 432.46 49.50)" fill="#7b8083"/><rect x="699.90" y="38.70" width="21.6" height="21.6" rx="4.2" transform="rotate(45 710.70 49.50)" fill="#7b8083"/><rect x="1117.26" y="38.70" width="21.6" height="21.6" rx="4.2" transform="rotate(45 1128.06 49.50)" fill="#7b8083"/><rect x="14" y="0" width="3.2" height="275" fill="#a87df6"/><rect x="5.10" y="39.00" width="21.0" height="21.0" rx="2.6" transform="rotate(45 15.60 49.50)" fill="#aa80fb"/></svg></div>
 <div id="tbar">
  <div class="tl" style="left:6px;background:#fc4b4f"></div>
  <div class="tl" style="left:21px;background:#fdb125"></div>
  <div class="tl" style="left:36px;background:#4f4d50"></div>
  <div id="ttl">04 - Abbysun</div>
 </div>
 <div id="rim"></div>
</div>
</body></html>
